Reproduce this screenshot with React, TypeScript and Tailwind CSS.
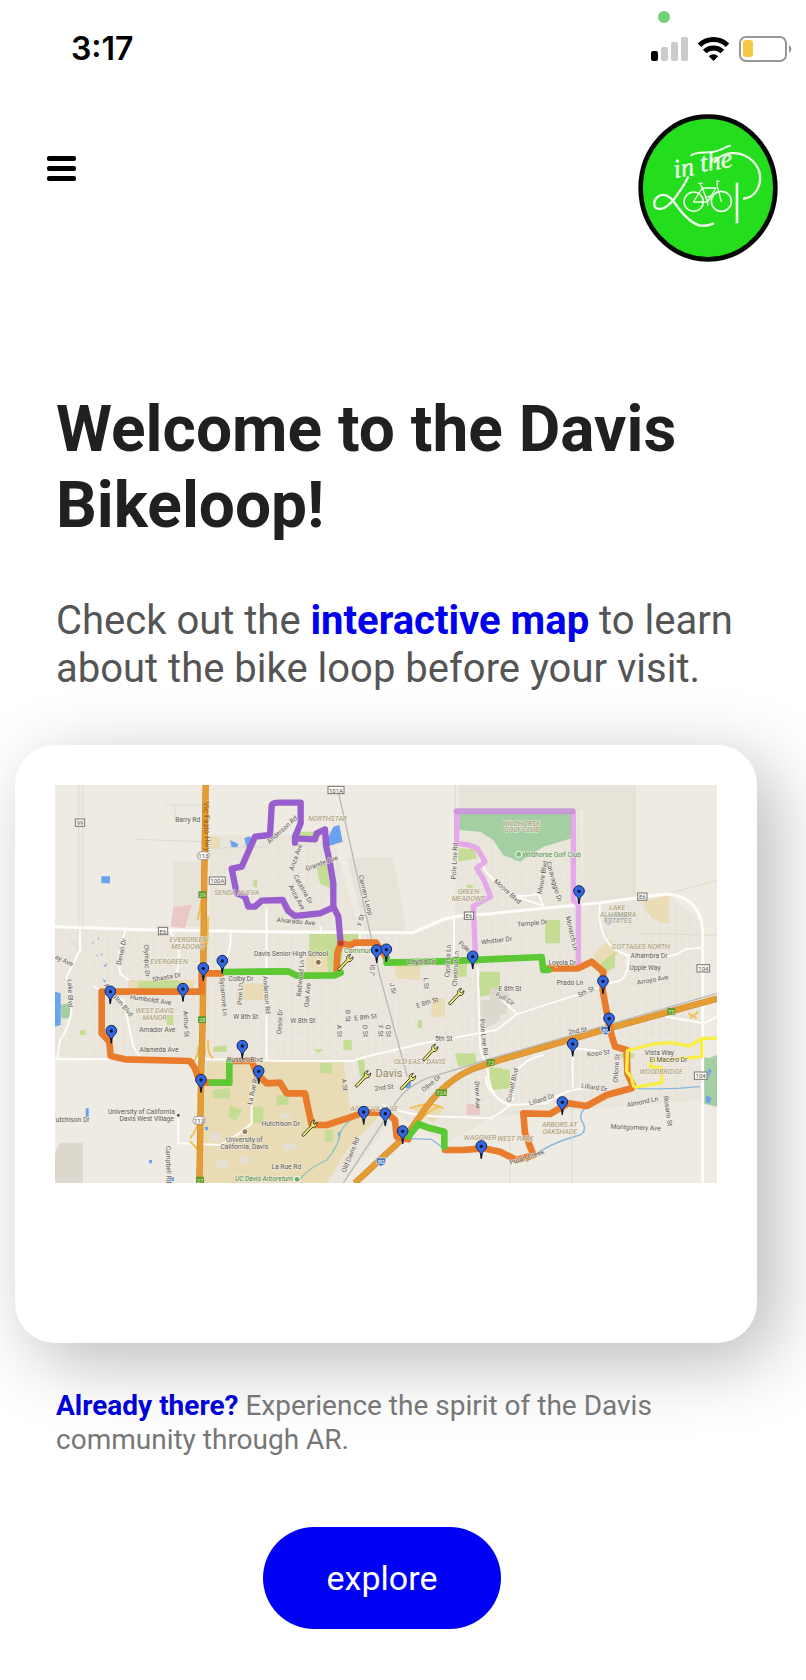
import React from "react";

type Point = [number, number];
type Label = { t: string; x: number; y: number; r?: number };

const pins: Point[] = [
  [517, 580], [460, 602], [181, 672], [399, 664], [184, 790], [453, 937], [577, 835], [626, 911],
  [980, 548], [1009, 546], [1268, 567], [1587, 371], [1659, 641], [1677, 753], [1568, 829],
  [1537, 1004], [941, 1033], [1006, 1038], [1058, 1091], [1294, 1136],
];

const wrenches: Point[] = [
  [885, 548], [1218, 650], [1140, 818], [938, 897], [1073, 905], [778, 1045],
];

const streets: Label[] = [
  { t: "Barry Rd", x: 413, y: 120 },
  { t: "Anderson Rd", x: 697, y: 150, r: -42 },
  { t: "Anza Ave", x: 738, y: 232, r: -70 },
  { t: "Grande Ave", x: 815, y: 250, r: -20 },
  { t: "Catalina Dr", x: 759, y: 328, r: 60 },
  { t: "Anza Ave", x: 740, y: 352, r: 62 },
  { t: "Alvarado Ave", x: 738, y: 425, r: 5 },
  { t: "Cannery Loop", x: 946, y: 345, r: 76 },
  { t: "F St", x: 933, y: 420, r: -75 },
  { t: "Pole Line Rd", x: 1214, y: 243, r: -87 },
  { t: "Moore Blvd", x: 1372, y: 335, r: 42 },
  { t: "Moore Blvd", x: 1478, y: 292, r: -80 },
  { t: "Caravaggio Dr", x: 1512, y: 305, r: 74 },
  { t: "Temple Dr", x: 1447, y: 430, r: -5 },
  { t: "Whittier Dr", x: 1340, y: 482, r: -7 },
  { t: "Monarch Ln", x: 1565, y: 460, r: 77 },
  { t: "Alhambra Dr", x: 1797, y: 527 },
  { t: "Upple Way", x: 1785, y: 563 },
  { t: "Arroyo Ave", x: 1808, y: 600, r: -10 },
  { t: "Prado Ln", x: 1560, y: 610 },
  { t: "Loyola Dr", x: 1537, y: 548 },
  { t: "Loyola Dr", x: 1115, y: 547 },
  { t: "Colby Dr", x: 573, y: 597 },
  { t: "Pole", x: 1242, y: 500, r: 40 },
  { t: "Cypress Ln", x: 1194, y: 543, r: -87 },
  { t: "Chestnut Ln", x: 1217, y: 566, r: -87 },
  { t: "J St", x: 968, y: 570, r: -85 },
  { t: "Redwood Ln", x: 752, y: 595, r: -85 },
  { t: "Oak Ave", x: 773, y: 645, r: -85 },
  { t: "Olympic Dr", x: 290, y: 542, r: 88 },
  { t: "Denali Dr", x: 215, y: 515, r: -78 },
  { t: "Shasta Dr", x: 350, y: 592, r: -10 },
  { t: "ay Ave", x: 42, y: 542, r: 25 },
  { t: "Lake Blvd", x: 60, y: 640, r: 88 },
  { t: "Humboldt Ave", x: 302, y: 660, r: 8 },
  { t: "Arlington Blvd", x: 205, y: 660, r: 50 },
  { t: "Arthur St", x: 408, y: 732, r: 87 },
  { t: "Amador Ave", x: 322, y: 750 },
  { t: "Alameda Ave", x: 327, y: 811 },
  { t: "Sycamore Ln", x: 520, y: 650, r: 85 },
  { t: "Pine Ln", x: 571, y: 642, r: -88 },
  { t: "Anderson Rd", x: 649, y: 645, r: 86 },
  { t: "W 8th St", x: 587, y: 711 },
  { t: "Oeste Dr", x: 690, y: 725, r: -87 },
  { t: "W 8th St", x: 758, y: 724 },
  { t: "E 8th St", x: 947, y: 712, r: -6 },
  { t: "B St", x: 893, y: 708, r: 88 },
  { t: "A St", x: 868, y: 753, r: 88 },
  { t: "D St", x: 945, y: 753, r: 88 },
  { t: "F St", x: 991, y: 753, r: 88 },
  { t: "G St", x: 1014, y: 753, r: 88 },
  { t: "A St", x: 883, y: 915, r: 82 },
  { t: "J St", x: 1028, y: 625, r: 80 },
  { t: "L St", x: 1128, y: 610, r: 88 },
  { t: "E 8th St", x: 1132, y: 668, r: -17 },
  { t: "5th St", x: 1181, y: 777 },
  { t: "2nd St", x: 1002, y: 923, r: -6 },
  { t: "Olive Dr", x: 1144, y: 910, r: -40 },
  { t: "Pole Line Rd", x: 1301, y: 772, r: 84 },
  { t: "Drew Ave", x: 1282, y: 945, r: 88 },
  { t: "E 8th St", x: 1380, y: 628 },
  { t: "Full Cir", x: 1365, y: 657, r: 30 },
  { t: "5th St", x: 1608, y: 636, r: -25 },
  { t: "2nd St", x: 1583, y: 753, r: -10 },
  { t: "Koso St", x: 1645, y: 820, r: -6 },
  { t: "Ohlone St", x: 1700, y: 865, r: -86 },
  { t: "Lillard Dr", x: 1633, y: 923, r: 8 },
  { t: "Lillard Dr", x: 1475, y: 959, r: -18 },
  { t: "Cowell Blvd", x: 1388, y: 915, r: -77 },
  { t: "Vista Way", x: 1828, y: 819 },
  { t: "El Macero Dr", x: 1855, y: 840 },
  { t: "Almond Ln", x: 1778, y: 966, r: -12 },
  { t: "Rosario St", x: 1853, y: 993, r: 82 },
  { t: "Montgomery Ave", x: 1757, y: 1043, r: 2 },
  { t: "Putah Creek", x: 1431, y: 1132, r: -18 },
  { t: "La Rue Rd", x: 609, y: 930, r: -78 },
  { t: "Russell Blvd", x: 585, y: 841 },
  { t: "Hutchison Dr", x: 692, y: 1032 },
  { t: "utchison Dr", x: 68, y: 1021 },
  { t: "La Rue Rd", x: 709, y: 1162 },
  { t: "Old Davis Rd", x: 902, y: 1125, r: -68 },
  { t: "Campbell Rd", x: 355, y: 1154, r: 89 },
  { t: "Davis Senior High School", x: 723, y: 523 },
  { t: "University of California", x: 274, y: 997 },
  { t: "Davis West Village", x: 290, y: 1016 },
  { t: "University of", x: 583, y: 1081 },
  { t: "California, Davis", x: 583, y: 1100 },
];

const districts: Label[] = [
  { t: "NORTHSTAR", x: 833, y: 118 },
  { t: "SENDA NUEVA", x: 560, y: 338 },
  { t: "EVERGREEN", x: 415, y: 481 },
  { t: "MEADOWS", x: 414, y: 500 },
  { t: "EVERGREEN", x: 357, y: 545 },
  { t: "WEST DAVIS", x: 314, y: 694 },
  { t: "MANOR", x: 314, y: 714 },
  { t: "GREEN", x: 1255, y: 337 },
  { t: "MEADOWS", x: 1255, y: 356 },
  { t: "WILDHORSE", x: 1413, y: 132 },
  { t: "GOLF CLUB", x: 1415, y: 151 },
  { t: "LAKE", x: 1702, y: 385 },
  { t: "ALHAMBRA", x: 1704, y: 405 },
  { t: "ESTATES", x: 1704, y: 424 },
  { t: "COTTAGES NORTH", x: 1773, y: 500 },
  { t: "OLD EAST DAVIS", x: 1109, y: 845 },
  { t: "AGGIE VILLAGE", x: 972, y: 987 },
  { t: "WAGGNER", x: 1290, y: 1073 },
  { t: "WEST PARK", x: 1396, y: 1078 },
  { t: "ARBORS AT", x: 1529, y: 1036 },
  { t: "OAKSHADE", x: 1529, y: 1055 },
  { t: "WOODBRIDGE", x: 1833, y: 877 },
];

const shields: Label[] = [
  { t: "99", x: 90, y: 128 },
  { t: "100A", x: 502, y: 302 },
  { t: "E6", x: 339, y: 453 },
  { t: "101A", x: 858, y: 30 },
  { t: "E6", x: 1257, y: 407 },
  { t: "E6", x: 1777, y: 350 },
  { t: "104", x: 1960, y: 565 },
  { t: "104", x: 1952, y: 887 },
];

const exits: Label[] = [
  { t: "29", x: 457, y: 344 },
  { t: "28", x: 456, y: 719 },
  { t: "27", x: 450, y: 1200 },
  { t: "72A", x: 1174, y: 938 },
  { t: "73", x: 1322, y: 847 },
  { t: "75", x: 1864, y: 694 },
];

function turn({ x, y, r }: Label) {
  return r ? `rotate(${r} ${x} ${y})` : undefined;
}

function BikeLoopMap() {
  return (
    <svg
      viewBox="15 15 1986 1194"
      className="block h-auto w-full"
      role="img"
      aria-label="Map of the Davis bike loop"
      fontFamily="Roboto, sans-serif"
    >
      <defs>
        <pattern id="blocks" width="46" height="38" patternUnits="userSpaceOnUse">
          <path d="M0 0H46M0 20H27M0 0V38M27 0V38" fill="none" stroke="#f4f1ea" strokeWidth="3" />
          <path d="M2 2H45M2 22H26M29 2V37" fill="none" stroke="#dcd8ce" strokeWidth="1" />
        </pattern>
        <g id="pin">
          <path
            d="M0 0 L-3 -16 C-6 -25 -16 -27 -16 -38 A16 16 0 0 1 16 -38 C16 -27 6 -25 3 -16 Z"
            fill="#3268e0"
            stroke="#14245c"
            strokeWidth="3"
            strokeLinejoin="round"
          />
          <path d="M0 0V-16" stroke="#111827" strokeWidth="4" />
          <circle cy="-37" r="5" fill="#0b1330" />
        </g>
        <path
          id="wrench"
          d="M-21 18 L5 -9 C3 -18 8 -25 17 -25 L11 -16 L16 -11 L24 -18 C24 -8 18 -2 9 -3 L-15 23 C-19 26 -24 22 -21 18 Z"
          fill="#f2ee70"
          stroke="#3d3d36"
          strokeWidth="3"
          strokeLinejoin="round"
        />
      </defs>

      <rect x="15" y="15" width="1986" height="1194" fill="#eeebe2" />

      <g fill="#e9e5db">
        <path d="M15 442L650 455L1090 460L1250 405L1850 342L1958 430V960L1330 1010L1190 1090L1000 980L890 845L15 830Z" />
        <path d="M480 165H845L930 450L480 452Z" />
        <path d="M1218 90L1590 90L1600 372L1215 410Z" />
        <path d="M455 835H900L1035 1010L880 1209H450Z" />
      </g>
      <path d="M1225 15H1755V350L1600 370V90H1225Z" fill="#e7e3d8" />
      <path d="M370 245H455V440H370ZM890 232H1030L1070 455H945Z" fill="#e8e3d9" />
      <g fill="url(#blocks)" opacity="0.7">
        <path d="M15 450L650 460L1100 465L1260 412L1850 350L1950 430V930L1330 1000L1190 990L890 835L15 830Z" />
        <path d="M560 180H840L920 445H500V290Z" />
        <path d="M1235 190L1570 210V360L1240 395Z" />
        <path d="M300 930H430V1080H390V950H300Z" />
      </g>

      <g fill="#ead69d" opacity="0.62">
        <path d="M470 845H880L900 980L985 1010L890 1110L830 1209H455V950Z" />
        <path d="M480 170H510V205H480ZM1030 550H1110V600L1040 595ZM1145 655H1185V710H1145ZM1780 365L1857 345V430Q1790 425 1780 365ZM580 610H640V660H580ZM1630 520L1680 480L1710 520L1640 560Z" />
        <path d="M235 600H430V630H235ZM1080 980L1125 970L1180 990L1150 1030ZM770 530H840V585H770Z" />
      </g>
      <g fill="#c4dc94">
        <path d="M778 462H930V490L880 500L870 580H835L830 530H778Z" />
        <path d="M800 265L830 250L848 330L810 310ZM740 155H810V170H740ZM1225 205L1275 208L1280 235L1225 245ZM1485 420H1530V490H1485ZM1290 575H1350V630L1285 625ZM1220 535H1250V590H1220ZM1640 560L1695 515V560L1650 590ZM1320 860L1380 870V925L1330 930L1315 900Z" />
        <path d="M265 605L380 600L425 630H265ZM350 705H370V735H350ZM90 750H106V765H90ZM1215 820H1275L1280 850L1225 860ZM880 780H905V810H880ZM922 840H944V890H930ZM810 850H845V880H810ZM605 980H640V1030H605ZM490 930L540 925V955H490ZM490 800L530 795V815H490ZM825 1050H850V1085H825ZM680 945H715V975H680ZM1290 600H1350V640L1290 650ZM1103 720H1116V745H1103ZM1250 315H1268V325H1250ZM610 300H622V322H610ZM440 800H468V825H440Z" />
        <path d="M540 975L575 990L560 1020L535 1015ZM790 808H820L805 820ZM1710 820H1755L1750 835H1715Z" />
      </g>
      <g fill="#a3cfa3">
        <path d="M1228 97L1565 97V175L1480 200L1410 245L1360 225L1330 180L1290 155L1228 150Z" />
        <path d="M30 675L60 668V715H35ZM1957 830L1975 835L2001 825V980L1955 970Z" />
      </g>
      <g fill="#6aa2ee">
        <path d="M154 289H180V310H154ZM540 180L565 192L562 202L545 203ZM583 175L600 168L605 185L590 205ZM850 140L868 135L878 185L830 200L835 170ZM15 635L32 640V735L15 740ZM107 985H116V1012H107ZM297 1140H306V1150H297ZM465 1040H474V1050H465ZM360 1192H372V1203H360ZM1067 905H1083V925H1067ZM1975 865L1985 872L1975 895ZM1968 945L1985 955L1978 972L1968 965ZM863 1060L875 1050L868 1080Z" />
        <path d="M125 483l6 6-3 2zM142 470l6 6-3 3zM138 523l6 4-3 3zM152 518l6 6-3 3zM160 558l11-8-4 10zM158 598l10 4-5 6z" />
      </g>
      <path d="M1660 410L1700 395L1740 405L1730 420L1690 418L1680 435L1670 435Z" fill="#a5c6ea" />
      <g fill="#e9c8c6">
        <path d="M370 382L425 374L405 445L362 440ZM1250 972H1290V1005H1250Z" />
      </g>
      <path d="M1292 660H1350V720L1310 745L1290 700ZM1320 620L1380 640L1370 700L1320 710ZM30 1088H97V1209H15V1120Z" fill="#dcd8ce" />
      <path d="M480 1058H510V1085H480ZM565 1130H605V1150H565ZM700 1090H740V1110H700ZM500 1140H535V1165H500ZM690 1000H720V1015H690Z" fill="#e4dfd3" />

      <g fill="none" stroke="#86b5e0" strokeWidth="4">
        <path d="M748 1200Q775 1165 830 1140Q865 1100 870 1060Q890 1015 945 1000" stroke="#8ac6bf" />
        <path d="M1070 1076L1145 1078L1180 1105" />
        <path d="M1610 980Q1580 1005 1600 1030Q1610 1055 1590 1065Q1480 1095 1430 1145M1750 925Q1850 930 1950 920" />
      </g>

      <g fill="none" stroke="#dedad0" strokeWidth="3">
        <path d="M86 15V450M98 15V450M97 1085V1209M345 75H455M375 75V115M260 178L455 185M480 205L660 200M1216 15V100M1566 880V1209M1380 1080V1209M1755 15V350" />
        <path d="M1860 340L2001 300M1770 460L1960 465M2001 465H1960M60 470L90 520" />
      </g>
      <g fill="none" stroke="#fdfcf9" strokeLinecap="round" strokeLinejoin="round">
        <g strokeWidth="9">
          <path d="M15 440L300 450L650 455L1090 458L1180 418L1230 407L1320 401L1650 368L1850 342Q1950 350 1958 450V1209" />
        </g>
        <g strokeWidth="6">
          <path d="M15 838L430 836L700 843L910 843L940 832L1120 790L1340 750L1400 703L1500 670L1660 620" />
          <path d="M1650 370Q1640 460 1690 505Q1740 540 1810 530Q1870 535 1905 508L1958 503M1735 530Q1735 600 1700 605L1665 612" />
          <path d="M90 450V510L50 590L65 690Q55 750 30 780L22 835M225 452L205 530L210 580L235 600M360 455Q400 500 380 580M540 450Q550 510 515 560" />
          <path d="M650 385V840M812 440V460M929 455V505M1212 407V560M1283 560L1290 800L1315 880Q1320 960 1380 975L1490 970Q1550 920 1630 925" />
          <path d="M1568 828V920M1380 975Q1340 1010 1325 1010M1310 890Q1300 930 1375 975M1390 960Q1370 850 1480 825M1000 975Q1080 1010 1190 1010L1325 1015" />
          <path d="M385 1015V1090L510 1095Q560 1070 605 1030V920M1290 245Q1330 320 1400 350L1480 378M1320 285Q1380 370 1465 340L1480 378M130 620L220 660L250 800L270 830" />
          <path d="M1570 805L1650 813M1850 710L1960 730L2001 710M1350 655L1400 700" />
        </g>
      </g>

      <g fill="none" stroke="#b9b8b6" strokeWidth="4">
        <path d="M865 35L990 590L1072 890" />
        <path d="M880 1209L1030 980Q1060 925 1130 895L1350 828L2001 640" />
      </g>

      <g fill="none" stroke="#f0c259" strokeWidth="6">
        <path d="M443 420L455 360M475 410L472 480L462 530M430 845Q445 830 452 780M475 780Q470 820 490 835M420 1075Q440 1050 445 1025M420 1085Q440 1100 445 1115M1080 985Q1140 960 1180 985M1100 1030Q1150 980 1170 980M1915 700L1940 715M1945 695L1920 715" />
      </g>
      <g fill="none" stroke="#d0872a" strokeWidth="19">
        <path d="M467 15L462 350L460 560L458 720L453 900L450 1100L448 1209" />
        <path d="M915 1209L1000 1130L1070 1065L1130 980Q1190 900 1270 866L1350 840L1660 750L2001 656" />
      </g>
      <g fill="none" stroke="#e49c34" strokeWidth="16">
        <path d="M467 15L462 350L460 560L458 720L453 900L450 1100L448 1209" />
        <path d="M915 1209L1000 1130L1070 1065L1130 980Q1190 900 1270 866L1350 840L1660 750L2001 656" />
      </g>

      <g fill="none" strokeLinejoin="round" strokeLinecap="round">
        <g stroke="#e39aec" strokeWidth="16" opacity="0.8">
          <path d="M1277 545L1270 378L1322 350L1302 300L1280 265L1305 245L1282 205L1255 195L1220 190V100" />
          <path d="M1570 100V360L1585 375V560" />
        </g>
        <path d="M1220 94H1568" stroke="#c793dc" strokeWidth="18" opacity="0.9" />
        <path
          d="M872 490L865 410L850 380V310L840 250L828 195L825 148L800 160L795 178L735 175V188L735 170L752 130V68H685Q665 68 665 80L660 165L615 170L595 215L575 260L545 266L560 340L585 350L595 380L615 380L635 362L698 360L715 393L735 408L810 400L850 382"
          stroke="#9455cc"
          strokeWidth="19"
          opacity="0.94"
        />
        <g stroke="#e87c2c" strokeWidth="20">
          <path d="M860 570L862 520L872 490L900 496L915 488H978L1000 520L1010 535" />
          <path d="M515 580H455V635H155V760L178 785L182 828L225 838L420 843L435 865L450 908H485" />
          <path d="M540 843H605L620 880L650 910L690 908L710 940H765L785 1035H830L900 1012L940 998H1010L1035 1020L1040 1070L1075 1078" />
          <path d="M1185 1110H1240L1300 1105L1350 1115L1400 1140L1450 1125L1425 1060L1420 1000L1500 1002L1555 970L1610 978L1670 945L1745 925" />
          <path d="M1495 565H1585L1625 545L1660 575L1658 630L1680 750L1695 800L1730 810L1732 880L1750 920" />
        </g>
        <g stroke="#5cc833" strokeWidth="20">
          <path d="M525 576L715 574L740 587L855 586L872 578" />
          <path d="M1010 535V548L1180 544L1475 531L1480 570H1495" />
          <path d="M485 908H538V843M1075 1070L1105 1032L1135 1043L1183 1055V1100" />
        </g>
        <circle cx="872" cy="490" r="9" fill="#c13a3e" />
        <path
          d="M1752 922L1743 890L1730 875L1732 812L1810 792L1860 788L1920 798L1955 775H2001M1955 775V830L1865 838L1805 840L1800 860L1835 864V908L1752 922"
          stroke="#f8ee45"
          strokeWidth="10"
          strokeLinecap="butt"
        />
      </g>

      <g textAnchor="middle" dominantBaseline="central" stroke="#f2efe8" strokeWidth="4" strokeOpacity="0.7" paintOrder="stroke">
        <g fontSize="20" fill="#5c5955">
          {streets.map((s, i) => (
            <text key={i} x={s.x} y={s.y} transform={turn(s)}>{s.t}</text>
          ))}
        </g>
        <g fontSize="21" fill="#a59772" fontStyle="italic">
          {districts.map((s, i) => (
            <text key={i} x={s.x} y={s.y}>{s.t}</text>
          ))}
        </g>
        <text x="1017" y="880" fontSize="33" fill="#8f8262">Davis</text>
        <text x="1505" y="224" fontSize="20" fill="#4f9245">Wildhorse Golf Club</text>
        <text x="642" y="1198" fontSize="20" fill="#3e8b3b" fontStyle="italic">UC Davis Arboretum</text>
        <text x="925" y="513" fontSize="21" fill="#4f9245">Commun</text>
        <text x="470" y="140" fontSize="24" fill="#8a5a12" stroke="none" transform="rotate(88 470 140)">Vic Fazio Hwy</text>
      </g>

      <g textAnchor="middle" dominantBaseline="central" fontSize="18">
        {shields.map((s, i) => {
          const w = s.t.length > 3 ? 48 : s.t.length > 2 ? 38 : 28;
          return (
            <g key={i}>
              <rect x={s.x - w / 2} y={s.y - 11} width={w} height="22" fill="#fbfaf6" stroke="#77746f" strokeWidth="3" />
              <text x={s.x} y={s.y} fill="#55524e">{s.t}</text>
            </g>
          );
        })}
        {exits.map((s, i) => {
          const w = s.t.length > 2 ? 34 : 24;
          return (
            <g key={i}>
              <rect x={s.x - w / 2} y={s.y - 10} width={w} height="20" rx="2" fill="#5c9a27" />
              <text x={s.x} y={s.y} fill="#dcedc8">{s.t}</text>
            </g>
          );
        })}
        {[[460, 227], [447, 1021]].map(([x, y]) => (
          <g key={y}>
            <rect x={x - 18} y={y - 12} width="36" height="24" rx="12" fill="#fbfaf6" stroke="#77746f" strokeWidth="2" />
            <text x={x} y={y} fill="#55524e">113</text>
          </g>
        ))}
        {[[993, 1144], [1667, 750]].map(([x, y]) => (
          <g key={y}>
            <path d={`M${x - 13} ${y - 12}Q${x} ${y - 7} ${x + 13} ${y - 12}Q${x + 19} ${y + 10} ${x} ${y + 15}Q${x - 19} ${y + 10} ${x - 13} ${y - 12}Z`} fill="#4c78bb" stroke="#e8eefa" strokeWidth="2" />
            <text x={x} y={y} fill="#fff">80</text>
          </g>
        ))}
      </g>
      <g stroke="#fff" strokeWidth="3">
        <circle cx="805" cy="547" r="9" fill="#8b7355" />
        <circle cx="385" cy="1006" r="6" fill="#6b4d4d" />
        <circle cx="585" cy="1055" r="9" fill="#9b7a68" />
        <circle cx="741" cy="1198" r="9" fill="#6fae5b" />
        <circle cx="1406" cy="223" r="9" fill="#7cbc6f" />
      </g>

      {wrenches.map(([x, y]) => (
        <use key={`${x}-${y}`} href="#wrench" x={x} y={y} />
      ))}
      {pins.map(([x, y]) => (
        <use key={`${x}-${y}`} href="#pin" x={x} y={y} />
      ))}
    </svg>
  );
}

function Logo() {
  return (
    <svg viewBox="54 342 420 444" className="h-[148px] w-[140px]" role="img" aria-label="In the Loop">
      <ellipse cx="264" cy="564" rx="202" ry="214" fill="#24dd1c" stroke="#050805" strokeWidth="14" />
      <g fill="none" stroke="#effdec" strokeLinecap="round" strokeLinejoin="round">
        <path
          d="M204 532C196 548 190 560 180 572C160 604 140 628 118 627C98 624 99 604 111 592C128 576 148 588 162 606C184 638 210 668 238 676C254 679 268 676 279 671"
          strokeWidth="7"
        />
        <path d="M284 486C300 464 330 454 362 462C400 474 424 506 420 542C416 572 398 592 372 596" strokeWidth="7" />
        <path d="M351 548V670" strokeWidth="8" strokeLinecap="butt" />
        <path d="M214 466C228 455 256 460 282 455C300 452 312 443 330 437" strokeWidth="6" />
        <g strokeWidth="5">
          <circle cx="221" cy="605" r="29" />
          <circle cx="304" cy="604" r="30" />
        </g>
        <path d="M221 605L247 564L240 551M236 550H247M247 564H288L263 606L247 564M263 606H221M304 604L292 560L291 542M291 544H298M263 606L256 590M258 592L272 588M263 598V616" strokeWidth="4" />
      </g>
      <g
        fill="#effdec"
        stroke="#effdec"
        strokeWidth="1"
        fontFamily="'Liberation Serif', serif"
        fontStyle="italic"
        fontSize="80"
        transform="rotate(-9 166 534)"
      >
        <text x="164" y="534">in</text>
        <text x="246" y="528">the</text>
      </g>
    </svg>
  );
}

function StatusIcons() {
  return (
    <div className="flex items-center gap-[10px]">
      <svg viewBox="0 0 37 24" className="h-6 w-[37px]" role="img" aria-label="Cellular signal">
        <rect x="0" y="14" width="7" height="10" rx="2" fill="#000" />
        <rect x="10" y="10" width="7" height="14" rx="2" fill="#cbcbcb" />
        <rect x="20" y="5" width="7" height="19" rx="2" fill="#cbcbcb" />
        <rect x="30" y="0" width="7" height="24" rx="2" fill="#cbcbcb" />
      </svg>
      <svg viewBox="0 0 31 24" className="h-6 w-[31px]" role="img" aria-label="Wi-Fi">
        <g fill="none" stroke="#000" strokeWidth="5">
          <path d="M1.5 8.3A20 20 0 0 1 29.5 8.3" />
          <path d="M6.6 14.6A12.6 12.6 0 0 1 24.4 14.6" />
        </g>
        <path d="M15.5 24L10.8 19.2A6.8 6.8 0 0 1 20.2 19.2Z" />
      </svg>
      <svg viewBox="0 0 53 26" className="h-[26px] w-[53px]" role="img" aria-label="Battery low">
        <rect x="1" y="1" width="46" height="24" rx="6" fill="#fff" stroke="#97979a" strokeWidth="2" />
        <rect x="4" y="4" width="10" height="17" rx="3" fill="#f5c945" />
        <path d="M50 9A4.5 4.5 0 0 1 50 17Z" fill="#97979a" />
      </svg>
    </div>
  );
}

export default function App() {
  return (
    <div className="min-h-screen overflow-x-hidden bg-white pb-[51px] font-['Roboto',sans-serif]">
      <div className="relative flex items-center justify-between pt-[29px] pr-[14px] pl-[71px]">
        <time className="font-['Inter',sans-serif] text-[32px] leading-10 font-semibold text-black">3:17</time>
        <StatusIcons />
        <span className="absolute top-[11px] right-[136px] size-3 rounded-full bg-[#6fd277]" />
      </div>

      <header className="flex items-start justify-between pt-[45px] pr-7 pl-[47px]">
        <button type="button" aria-label="Open menu" className="mt-[42px] flex w-[29px] flex-col gap-[5px]">
          <span className="h-[5px] w-full rounded-[2px] bg-black" />
          <span className="h-[5px] w-full rounded-[2px] bg-black" />
          <span className="h-[5px] w-full rounded-[2px] bg-black" />
        </button>
        <Logo />
      </header>

      <main className="pt-[130px]">
        <h1 className="px-14 text-[64px] leading-[76px] font-bold text-[#202020]">
          Welcome to the Davis Bikeloop!
        </h1>
        <p className="mt-[53px] px-14 text-[40px] leading-[48px] text-[#555555]">
          Check out the{" "}
          <a href="#map" className="font-bold text-[#0000ee]">interactive map</a>{" "}
          to learn about the bike loop before your visit.
        </p>

        <section
          id="map"
          className="mt-[52px] mr-[49px] ml-[15px] rounded-[40px] bg-white px-10 pt-10 pb-40 shadow-[18px_18px_72px_rgba(0,0,0,0.28)]"
        >
          <BikeLoopMap />
        </section>

        <p className="relative mt-[46px] px-14 text-[28px] leading-[34px] text-[#777777]">
          <a href="#ar" className="font-bold text-[#0000d8]">Already there?</a>{" "}
          Experience the spirit of the Davis community through AR.
        </p>

        <div className="mt-[70px] flex justify-center pr-[42px]">
          <button type="button" className="rounded-full bg-[#0000f5] px-16 py-[31px] text-[34px] leading-10 text-white">
            explore
          </button>
        </div>
      </main>
    </div>
  );
}
